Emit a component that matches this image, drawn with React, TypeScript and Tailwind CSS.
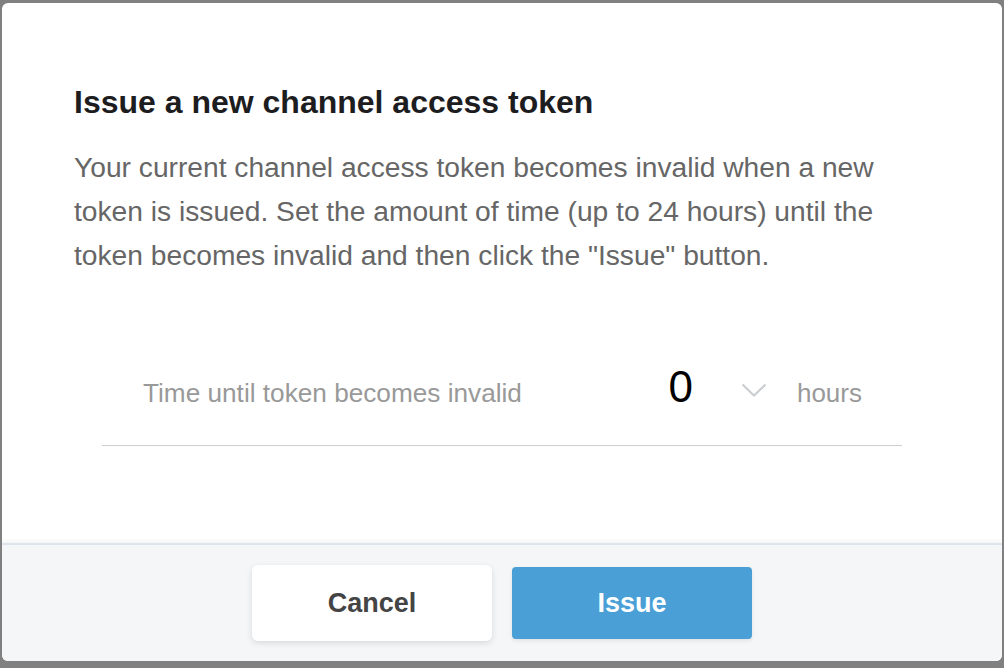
export default function App() {
  return (
    <div className="w-[1004px] h-[668px] bg-[#808080] pt-[3px] pl-[2px] font-['Liberation_Sans',Arial,sans-serif]">
      <div className="w-[1000px] h-[658px] rounded-[6px] bg-white flex flex-col overflow-hidden">
        <div className="h-[540px] px-[72px] pt-[80px]">
          <h2 className="text-[32px] leading-[38px] font-bold text-[#1d1d1f]">
            Issue a new channel access token
          </h2>
          <p className="mt-[24px] text-[28.2px] leading-[44px] text-[#666]">
            Your current channel access token becomes invalid when a new token is issued. Set the
            amount of time (up to 24 hours) until the token becomes invalid and then click the
            "Issue" button.
          </p>
          <div className="mx-[28px] mt-[68px] h-[101px] pt-[20px] pl-[41px] pr-[40px] border-b border-[#cfcfcf] flex items-baseline">
            <span className="flex-1 text-[26.2px] text-[#999]">Time until token becomes invalid</span>
            <span className="text-[44px] leading-none text-black">0</span>
            <svg
              width="26"
              height="14"
              viewBox="0 0 26 14"
              className="self-start ml-[48px] mt-[18px]"
              fill="none"
              stroke="#c9ced3"
              strokeWidth="2.2"
            >
              <path d="M1.5 1.5l11.5 11L24.5 1.5" />
            </svg>
            <span className="ml-[30px] text-[26px] text-[#999]">hours</span>
          </div>
        </div>
        <div className="h-[118px] bg-[#f5f6f8] border-t-2 border-[#dfe5ec] shadow-[0_-2px_4px_rgba(0,0,0,0.05)] flex items-center justify-center gap-[20px]">
          <button className="w-[240px] h-[76px] rounded-[6px] bg-white shadow-[0_2px_6px_rgba(0,0,0,0.12)] text-[27px] font-bold text-[#444]">
            Cancel
          </button>
          <button className="w-[240px] h-[72px] rounded-[4px] bg-[#4a9fd7] shadow-[0_2px_4px_rgba(0,0,0,0.08)] text-[27px] font-bold text-white">
            Issue
          </button>
        </div>
      </div>
    </div>
  );
}
